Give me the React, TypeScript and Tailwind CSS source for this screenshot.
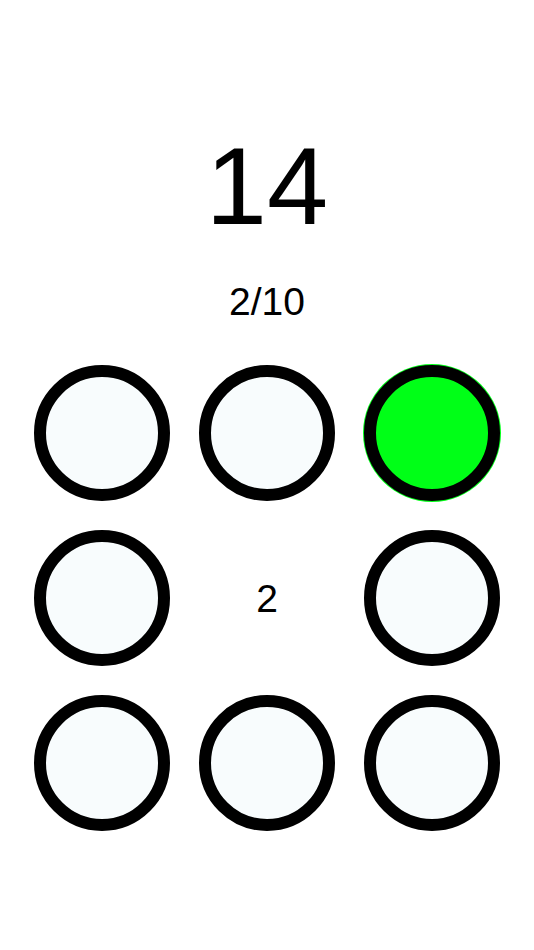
import React from "react";

const cells = [0, 0, 1, 0, 2, 0, 0, 0, 0];

export default function App() {
  return (
    <div
      className="w-[534px] h-[950px] bg-white flex flex-col items-center text-black"
      style={{ fontFamily: '"Liberation Sans", Arial, sans-serif' }}
    >
      <div className="mt-[131px] text-[110px] leading-none">14</div>
      <div className="mt-[41px] text-[39px] leading-none">2/10</div>
      <div className="mt-[44px] grid grid-cols-[136px_136px_136px] grid-rows-[136px_136px_136px] gap-[29px]">
        {cells.map((c, i) =>
          c === 2 ? (
            <div key={i} className="flex items-center justify-center text-[39px] leading-none">
              2
            </div>
          ) : (
            <div
              key={i}
              className={
                c === 1
                  ? "w-[136px] h-[136px] rounded-full border-[12px] border-black bg-[#00ff17] shadow-[0_0_0_1px_#00ff17]"
                  : "w-[136px] h-[136px] rounded-full border-[12px] border-black bg-[#f8fcfd]"
              }
            />
          )
        )}
      </div>
    </div>
  );
}
